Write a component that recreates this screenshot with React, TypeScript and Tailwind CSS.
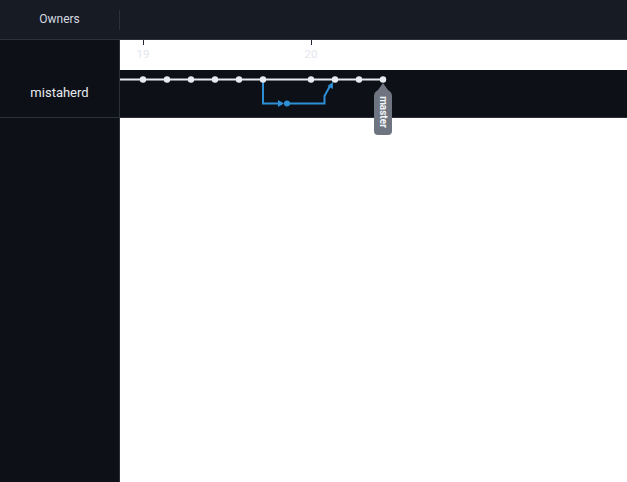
import React from "react";

const dots = [143, 167, 191, 215, 239, 263, 311, 335, 359, 383];

export default function App() {
  return (
    <div
      className="w-[627px] h-[482px] flex flex-col bg-white overflow-hidden"
      style={{ fontFamily: "Roboto, 'Liberation Sans', sans-serif" }}
    >
      <div className="h-[40px] flex items-center bg-[#171b24] border-b border-[#2c3038]">
        <div className="w-[120px] h-[20px] flex items-center justify-center border-r border-[#2c3038] text-[12px] text-[#d5d9e0] pb-[2px]">
          Owners
        </div>
      </div>
      <div className="flex flex-1">
        <div className="w-[120px] bg-[#0d1017] border-r border-[#2c3038] flex flex-col">
          <div className="h-[78px] border-b border-[#2c3038] flex items-end justify-center pb-[15px] text-[13px] text-[#e8ebf0]">
            mistaherd
          </div>
        </div>
        <div className="relative flex-1 flex flex-col">
          <div className="h-[30px] bg-white" />
          <div className="h-[48px] bg-[#0d1017] border-b border-[#2c3038]" />
          <svg
            className="absolute left-0 top-0"
            width="507"
            height="120"
            viewBox="120 40 507 120"
          >
            <line x1="143.5" y1="40" x2="143.5" y2="45" stroke="#1f2530" strokeWidth="1" />
            <line x1="311.5" y1="40" x2="311.5" y2="45" stroke="#1f2530" strokeWidth="1" />
            <text x="143" y="57.5" textAnchor="middle" fontSize="11.5" fill="#e2e7ee" fontFamily="Roboto, 'Liberation Sans', sans-serif">19</text>
            <text x="311" y="57.5" textAnchor="middle" fontSize="11.5" fill="#e2e7ee" fontFamily="Roboto, 'Liberation Sans', sans-serif">20</text>
            <line x1="120" y1="79.5" x2="383" y2="79.5" stroke="#e8ebf0" strokeWidth="2" />
            <path d="M263 80 V103.5 H280" fill="none" stroke="#2f8fd6" strokeWidth="2" />
            <path d="M278 100 L284 103.5 L278 107 Z" fill="#2f8fd6" />
            <path d="M287 103.5 H324.5 V96 L330 86" fill="none" stroke="#2f8fd6" strokeWidth="2" />
            <path d="M327.5 86 L333 82 L332.8 89 Z" fill="#2f8fd6" />
            <circle cx="287" cy="103.5" r="3" fill="#2f8fd6" />
            {dots.map((x) => (
              <circle key={x} cx={x} cy="79.5" r="3.2" fill="#e8ebf0" />
            ))}
            <path
              d="M383 83 L388 90 Q392 92 392 96 V131 Q392 135 388 135 H378 Q374 135 374 131 V96 Q374 92 378 90 Z"
              fill="#6e7480"
            />
            <text
              x="0"
              y="0"
              transform="translate(379.5 112) rotate(90)"
              textAnchor="middle"
              fontSize="10"
              fontWeight="bold"
              fill="#f3f4f6"
              fontFamily="Roboto, 'Liberation Sans', sans-serif"
            >
              master
            </text>
          </svg>
        </div>
      </div>
    </div>
  );
}
